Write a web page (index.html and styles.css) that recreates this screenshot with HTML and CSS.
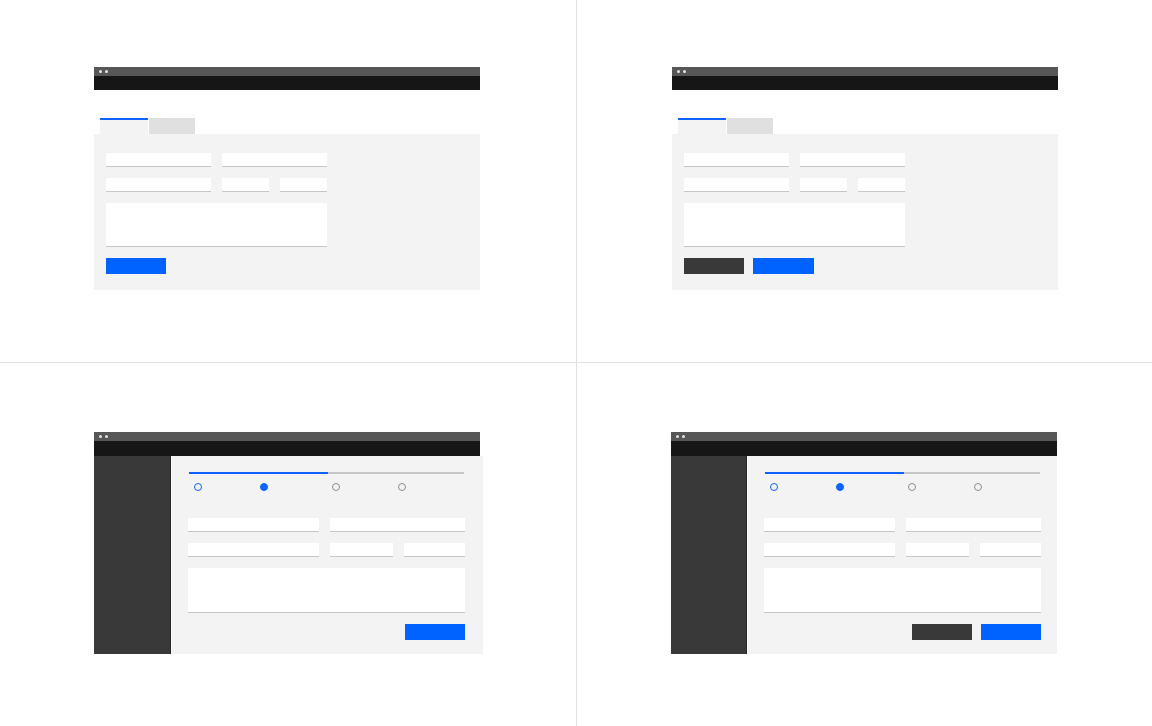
FILE: index.html
```html
<!DOCTYPE html>
<html>
<head>
<meta charset="utf-8">
<title>Form layouts</title>
<link rel="stylesheet" href="styles.css">
</head>
<body>
<div class="grid">
  <!-- Q1: tabs, single primary -->
  <div class="quad top">
    <div class="frame">
      <div class="titlebar"><span class="dot"></span><span class="dot"></span></div>
      <div class="header"></div>
      <div class="tabs"><div class="tab active"></div><div class="tab"></div></div>
      <div class="panel">
        <div class="form">
          <div class="row r1"><div class="field"></div><div class="field"></div></div>
          <div class="row r2"><div class="field"></div><div class="field"></div><div class="field"></div></div>
          <div class="area"></div>
          <div class="actions"><div class="btn primary"></div></div>
        </div>
      </div>
    </div>
  </div>
  <!-- Q2: tabs, secondary + primary -->
  <div class="quad top right">
    <div class="frame">
      <div class="titlebar"><span class="dot"></span><span class="dot"></span></div>
      <div class="header"></div>
      <div class="tabs"><div class="tab active"></div><div class="tab"></div></div>
      <div class="panel">
        <div class="form">
          <div class="row r1"><div class="field"></div><div class="field"></div></div>
          <div class="row r2"><div class="field"></div><div class="field"></div><div class="field"></div></div>
          <div class="area"></div>
          <div class="actions"><div class="btn secondary"></div><div class="btn primary wide"></div></div>
        </div>
      </div>
    </div>
  </div>
  <!-- Q3: sidebar, progress, primary right -->
  <div class="quad bottom">
    <div class="frame">
      <div class="titlebar"><span class="dot"></span><span class="dot"></span></div>
      <div class="header"></div>
      <div class="body body-wide">
        <div class="sidebar"></div>
        <div class="content">
          <div class="progress"><div class="done"></div><div class="todo"></div></div>
          <div class="steps">
            <span class="step current"></span>
            <span class="step filled s2"></span>
            <span class="step s3"></span>
            <span class="step s4"></span>
          </div>
          <div class="form2">
            <div class="row q1"><div class="field"></div><div class="field"></div></div>
            <div class="row q2"><div class="field"></div><div class="field"></div><div class="field"></div></div>
            <div class="area tall"></div>
            <div class="actions end"><div class="btn primary"></div></div>
          </div>
        </div>
      </div>
    </div>
  </div>
  <!-- Q4: sidebar, progress, secondary + primary right -->
  <div class="quad bottom">
    <div class="frame">
      <div class="titlebar"><span class="dot"></span><span class="dot"></span></div>
      <div class="header"></div>
      <div class="body">
        <div class="sidebar narrow"></div>
        <div class="content">
          <div class="progress"><div class="done"></div><div class="todo"></div></div>
          <div class="steps">
            <span class="step current"></span>
            <span class="step filled s2"></span>
            <span class="step s3"></span>
            <span class="step s4"></span>
          </div>
          <div class="form2">
            <div class="row q1"><div class="field"></div><div class="field"></div></div>
            <div class="row q2"><div class="field"></div><div class="field"></div><div class="field"></div></div>
            <div class="area tall"></div>
            <div class="actions end"><div class="btn secondary"></div><div class="btn primary"></div></div>
          </div>
        </div>
      </div>
    </div>
  </div>
</div>
</body>
</html>
```
FILE: styles.css
```css
* { box-sizing: border-box; }
html, body { margin: 0; padding: 0; background: #ffffff; font-family: "Liberation Sans", Arial, sans-serif; }

.grid {
  width: 1152px;
  height: 726px;
  display: grid;
  grid-template-columns: 576px 575px;
  grid-template-rows: 362px 363px;
  gap: 1px;
  background: #e0e0e0;
}

.quad { background: #ffffff; padding-left: 94px; }
.quad.right { padding-left: 95px; }
.quad.top { padding-top: 67px; }
.quad.bottom { padding-top: 69px; }

.frame { width: 386px; display: flex; flex-direction: column; }

.titlebar {
  height: 9px;
  background: #575757;
  display: flex;
  align-items: center;
  gap: 3px;
  padding-left: 5px;
}
.dot { width: 3px; height: 3px; border-radius: 50%; background: #e6e6e6; }
.header { height: 14px; background: #161616; }
.quad.bottom .header { height: 15px; }

.tabs { margin-top: 28px; padding-left: 6px; display: flex; gap: 1px; }
.tab { width: 46px; height: 16px; background: #e0e0e0; }
.tab.active { width: 48px; background: #f3f3f3; border-top: 2px solid #0f62fe; }

.panel { background: #f3f3f3; height: 156px; padding: 19px 12px 0; }

.form { width: 221px; display: flex; flex-direction: column; gap: 11px; }
.row { display: grid; column-gap: 11px; }
.r1 { grid-template-columns: 105px 105px; }
.r2 { grid-template-columns: 105px 47px 47px; }

.field { height: 14px; background: #ffffff; border-bottom: 1px solid #c6c6c6; }
.area { height: 44px; background: #ffffff; border-bottom: 1px solid #c6c6c6; }
.area.tall { height: 45px; }

.actions { display: flex; gap: 9px; }
.actions.end { justify-content: flex-end; }
.btn { width: 60px; height: 16px; }
.btn.primary { background: #0062ff; }
.btn.primary.wide { width: 61px; }
.btn.secondary { background: #393939; }

.body { display: flex; height: 198px; width: 386px; }
.body.body-wide { width: 389px; }
.sidebar { width: 77px; background: #393939; border-right: 1px solid #262626; }
.sidebar.narrow { width: 76px; }
.content {
  flex: 1;
  background: #f3f3f3;
  border-left: 1px solid #fafafa;
  padding: 16px 0 0 16px;
}

.progress { display: flex; height: 2px; width: 275px; margin-left: 1px; }
.progress .done { width: 139px; background: #0f62fe; }
.progress .todo { flex: 1; background: #c6c6c6; }

.steps { display: flex; margin-top: 9px; padding-left: 6px; height: 8px; }
.step {
  width: 8px;
  height: 8px;
  border-radius: 50%;
  border: 1px solid #8d8d8d;
  background: transparent;
}
.step.current { border: 1.5px solid #0f62fe; }
.step.filled { background: #0f62fe; border-color: #0f62fe; }
.s2 { margin-left: 58px; }
.s3 { margin-left: 64px; }
.s4 { margin-left: 58px; }

.form2 { width: 277px; margin-top: 27px; display: flex; flex-direction: column; gap: 11px; }
.q1 { grid-template-columns: 131px 135px; }
.q2 { grid-template-columns: 131px 63px 61px; }
```
